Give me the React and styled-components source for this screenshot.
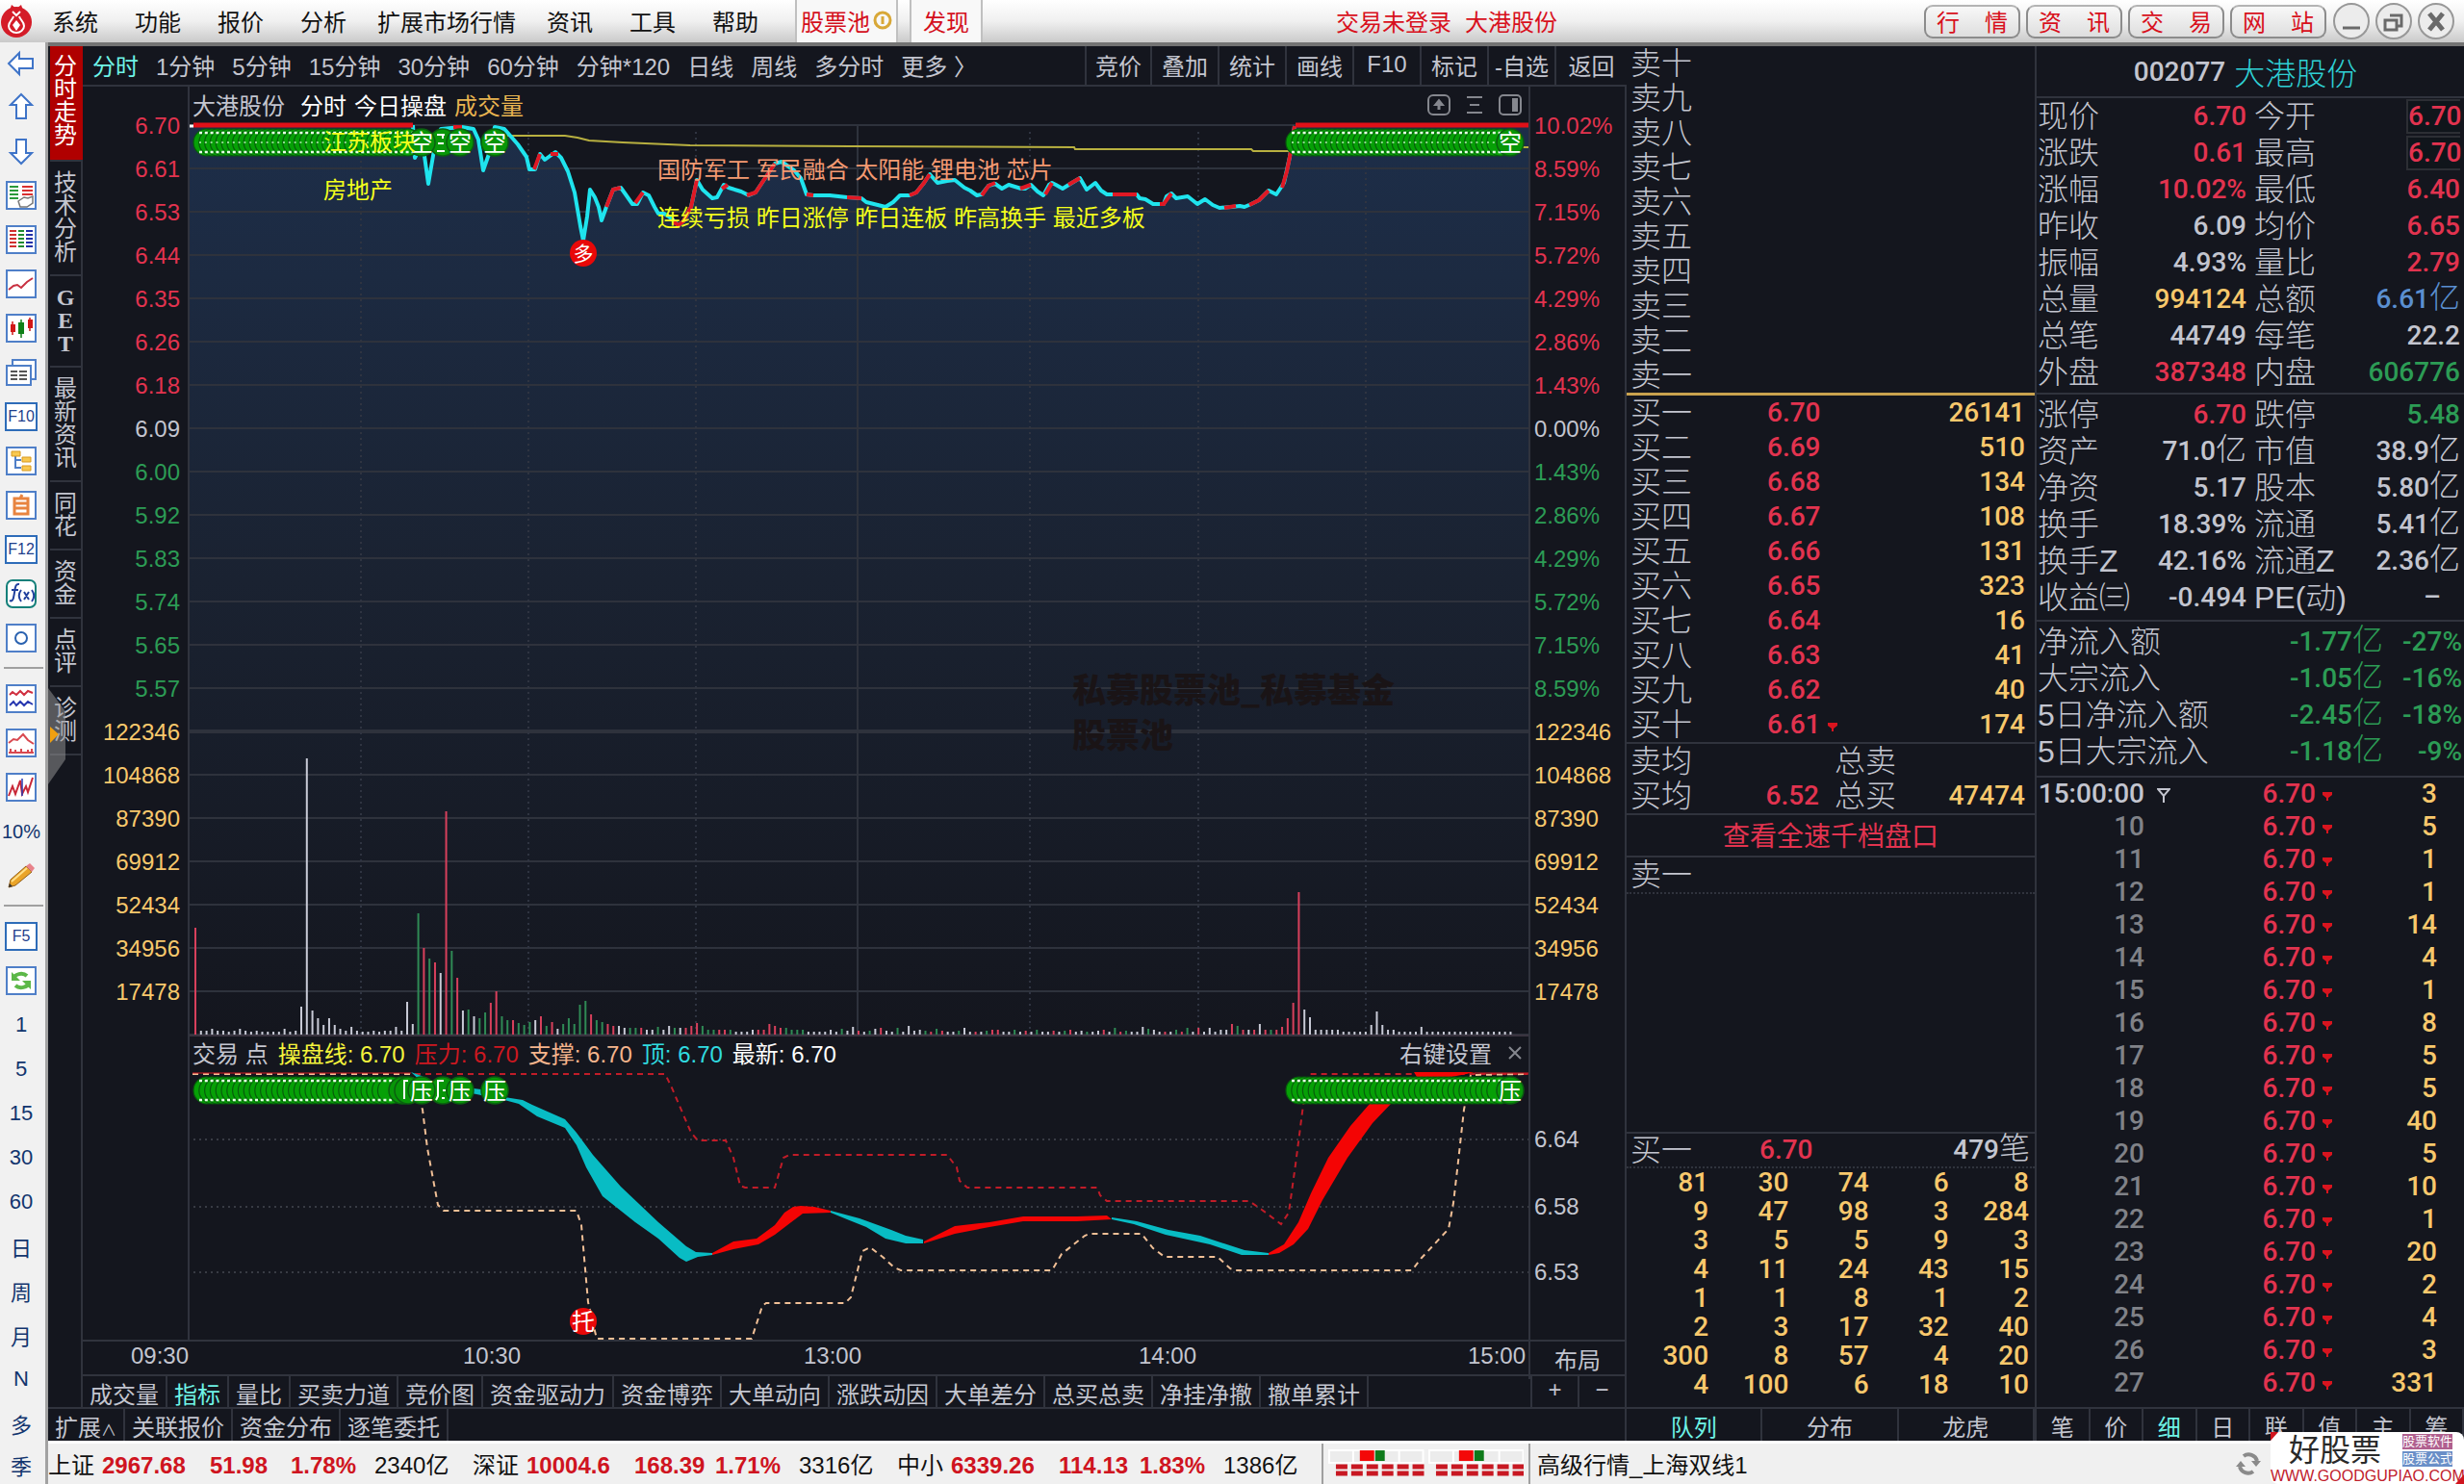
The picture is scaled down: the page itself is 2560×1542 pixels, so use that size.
import React from "react";
import styled, { createGlobalStyle } from "styled-components";

const GlobalStyle = createGlobalStyle`
  * {
    box-sizing: border-box;
  }
  body {
    margin: 0;
    background: #14161e;
    font-family: "Liberation Sans", "Noto Sans CJK SC", sans-serif;
    font-size: 24px;
  }
  button {
    border: 0;
    padding: 0;
    background: transparent;
    color: inherit;
    font: inherit;
    white-space: nowrap;
  }
`;

const colors = {
  text: "#c3c5cf",
  red: "#e2334f",
  green: "#2c9c55",
  gold: "#f8c86c",
  cyan: "#2fd0d4",
  active: "#6ff3e6",
  blue: "#5a8fd0",
  gray: "#808288",
  line: "#30333d",
  bg: "#14161e",
};

const Page = styled.div`
  display: flex;
  flex-direction: column;
  min-height: 100vh;
  background: ${colors.bg};
`;

const TopBar = styled.header`
  display: flex;
  align-items: center;
  height: 44px;
  background: linear-gradient(#ffffff, #f0f0f0 50%, #cacaca);
`;

const MenuGroup = styled.nav`
  display: flex;
  align-items: center;
  height: 44px;
`;

const Logo = styled.svg`
  width: 35px;
  height: 38px;
  flex: none;
`;

const MenuItem = styled.button`
  height: 44px;
  padding: 0 ${(p) => (p.$wide ? 13 : 19)}px 2px;
  color: #111;
`;

const MenuTab = styled.button`
  display: flex;
  align-items: center;
  gap: 3px;
  height: 44px;
  padding: 0 ${(p) => (p.$narrow ? 12 : 4)}px 2px;
  margin-right: 12px;
  border: 2px solid #c0c0c0;
  border-width: 0 2px;
  background: #f8f8f8;
  color: #d40f1c;
`;

const TabSpacer = styled.span`
  width: 19px;
`;

const TopTitle = styled.div`
  display: flex;
  justify-content: flex-end;
  gap: 14px;
  flex: 1;
  padding: 0 381px 2px 0;
  color: #d8101c;
`;

const WindowGroup = styled.div`
  display: flex;
  align-items: center;
  gap: 4px;
  padding-right: 9px;
`;

const PillButton = styled.button`
  display: flex;
  justify-content: space-between;
  align-items: center;
  width: 100px;
  height: 35px;
  padding: 0 11px 1px;
  margin-right: 2px;
  border: 2px solid #8c8c8c;
  border-top-color: #b4b4b4;
  border-radius: 9px;
  background: linear-gradient(#f8f8f8, #dedede);
  color: #d8101c;
`;

const RoundButton = styled.button`
  width: 40px;
  height: 40px;
  svg {
    display: block;
  }
`;

const Body = styled.div`
  display: flex;
  flex: 1;
`;

const Rail = styled.aside`
  width: 50px;
  flex: none;
  border-right: 3px solid #a2a2a2;
  background: #f1f1f1;
`;

const RailItem = styled.button`
  display: flex;
  align-items: center;
  justify-content: center;
  width: 44px;
  height: 46px;
  color: #12356e;
  font-size: ${(p) => (p.$small ? 20 : 22)}px;
  &:first-child {
    height: 44px;
  }
  &:last-child {
    height: 40px;
  }
  svg {
    display: block;
    overflow: visible;
  }
`;

const RailKey = styled.span`
  width: 34px;
  height: 30px;
  border: 2px solid #2e6cb8;
  background: #fff;
  color: #1f3f8c;
  font-size: 16px;
  line-height: 26px;
  text-align: center;
`;

const RailRule = styled.hr`
  height: 2px;
  margin: 7px 2px 8px 4px;
  border: 0;
  background: #a0a0a0;
`;

const Main = styled.div`
  display: flex;
  flex-direction: column;
  flex: 1;
  min-width: 0;
  border-top: 4px solid #737373;
`;

const Workspace = styled.main`
  display: flex;
  flex: 1;
  color: ${colors.text};
`;

const Left = styled.section`
  display: flex;
  flex-direction: column;
  flex: 1;
  min-width: 0;
`;

const LeftTop = styled.div`
  display: flex;
  flex: 1;
`;

const SideTabs = styled.nav`
  position: relative;
  width: 36px;
  flex: none;
  padding-left: 2px;
  border-right: 2px solid ${colors.line};
`;

const SideTab = styled.button`
  display: block;
  width: 34px;
  padding: ${(p) => (p.$active ? "9px 6px 13px 4px" : "10px 6px 11px 4px")};
  border-bottom: 2px solid ${colors.line};
  background: ${(p) => (p.$active ? "#b00000" : "transparent")};
  color: ${(p) => (p.$active ? "#fff" : colors.text)};
  line-height: 24px;
  white-space: normal;
  word-break: break-all;
`;

const GetLabel = styled.span`
  display: block;
  padding: 0 2px;
  font-family: "Liberation Serif", serif;
  font-weight: bold;
`;

const PullHandle = styled.svg`
  position: absolute;
  left: 0;
  top: 667px;
`;

const ChartArea = styled.div`
  display: flex;
  flex-direction: column;
  flex: 1;
  min-width: 0;
`;

const Toolbar = styled.div`
  display: flex;
  justify-content: space-between;
  height: 42px;
  border-bottom: 2px solid ${colors.line};
`;

const Periods = styled.div`
  display: flex;
  align-items: center;
  gap: 18px;
  padding: 0 0 2px 10px;
`;

const Period = styled.button`
  color: ${(p) => (p.$active ? colors.active : colors.text)};
`;

const Tools = styled.div`
  display: grid;
  grid-template-columns: 68px repeat(6, 70px) 75px;
`;

const Tool = styled.button`
  padding-bottom: 2px;
  border-left: 2px solid ${colors.line};
`;

const ChartBody = styled.div`
  display: grid;
  grid-template-columns: 111px 1fr 102px;
  flex: 1;
`;

const Axis = styled.div`
  padding: 18px ${(p) => (p.$right ? 0 : 8)}px 0 ${(p) => (p.$right ? 4 : 0)}px;
  border: 0 solid ${colors.line};
  border-width: ${(p) => (p.$right ? "0 2px" : "0 2px 0 0")};
  text-align: ${(p) => (p.$right ? "left" : "right")};
`;

const AxisLabel = styled.div`
  height: 45px;
  line-height: 45px;
  color: ${(p) => colors[p.$tone]};
`;

const SubAxis = styled.div`
  display: grid;
  grid-template-rows: 70px 68px;
  padding-top: 109px;
  line-height: 44px;
`;

const Plot = styled.div`
  display: grid;
  grid-template-columns: 1fr;
  grid-template-rows: 40px 947px 36px 279px;
  min-width: 0;
`;

const PlotSvg = styled.svg`
  grid-row: 1 / -1;
  grid-column: 1;
  width: 100%;
  height: 100%;
`;

const PlotHeader = styled.div`
  display: flex;
  align-items: center;
  grid-row: ${(p) => p.$row};
  grid-column: 1;
  gap: ${(p) => p.$gap}px;
  padding: 0 0 3px 3px;
`;

const Legend = styled.span`
  color: ${(p) => p.$color};
  white-space: nowrap;
`;

const HeaderIcons = styled.div`
  display: flex;
  align-items: center;
  gap: 17px;
  margin-left: auto;
  padding-right: 7px;
`;

const HeaderAction = styled.button`
  color: ${colors.text};
`;

const TimeRow = styled.div`
  display: grid;
  grid-template-columns: 1fr 102px;
  height: 36px;
  border-top: 2px solid ${colors.line};
`;

const Times = styled.div`
  display: grid;
  grid-template-columns: 345fr 354fr 348fr 342fr 60px;
  padding: 0 3px 0 50px;
  line-height: 30px;
`;

const LayoutButton = styled.button`
  padding-bottom: 4px;
  border: 0 solid ${colors.line};
  border-width: 0 2px;
`;

const TabRow = styled.div`
  display: flex;
  height: ${(p) => p.$height}px;
  border-top: 2px solid ${colors.line};
  border-right: 2px solid ${colors.line};
`;

const BottomTab = styled.button`
  padding: 0 7px 4px;
  border-right: 2px solid ${colors.line};
  color: ${(p) => (p.$active ? colors.active : colors.text)};
`;

const Caret = styled.span`
  font-size: 16px;
`;

const ZoomButtons = styled.div`
  display: grid;
  grid-template-columns: 49px 49px;
  margin-left: auto;
  button {
    padding-bottom: 4px;
    border-left: 2px solid ${colors.line};
  }
`;

const Orders = styled.section`
  display: flex;
  flex-direction: column;
  width: 424px;
  flex: none;
`;

const Info = styled.section`
  display: flex;
  flex-direction: column;
  width: 446px;
  flex: none;
  border-left: 2px solid ${colors.line};
`;

const Table = styled.table`
  width: 100%;
  border-collapse: collapse;
  table-layout: fixed;
  td,
  th {
    height: ${(p) => p.$row}px;
    padding: 0;
    line-height: ${(p) => p.$row}px;
    white-space: nowrap;
    vertical-align: middle;
  }
`;

const Label = styled.th`
  padding-left: ${(p) => p.$pad || 3}px !important;
  font-size: 32px;
  font-weight: 300;
  text-align: left;
`;

const Num = styled.td`
  padding-right: ${(p) => p.$pad || 0}px !important;
  color: ${(p) => colors[p.$tone || "text"]};
  font-family: Roboto, "Noto Sans CJK SC", sans-serif;
  font-size: 28px;
  font-weight: 500;
  text-align: ${(p) => p.$align || "right"};
`;

const Unit = styled.span`
  font-size: 32px;
  font-weight: 300;
  line-height: 30px;
`;

const Boxed = styled.span`
  display: block;
  height: 36px;
  margin-left: 62px;
  border: 2px solid #2c2e34;
  border-right: 0;
  background: #10151b;
  line-height: 32px;
`;

const PriceText = styled.span`
  margin-left: 46px;
`;

const QueueWrap = styled.div`
  padding: 0 6px 8px 2px;
`;

const Section = styled.div`
  padding: ${(p) => p.$pad || "0"};
  border-top: ${(p) => (p.$gold ? "3px solid #c9a24e" : `2px solid ${colors.line}`)};
`;

const DepthLink = styled.button`
  display: block;
  width: 100%;
  height: 42px;
  padding-bottom: 4px;
  color: ${colors.red};
  font-size: 28px;
`;

const Dotted = styled.div`
  border-bottom: 2px dotted ${colors.line};
`;

const Blank = styled.div`
  flex: 1;
`;

const PanelTabs = styled.div`
  display: grid;
  grid-template-columns: repeat(${(p) => p.$count}, 1fr);
  height: 35px;
  margin-top: auto;
  border-top: 2px solid ${colors.line};
`;

const PanelTab = styled.button`
  padding-bottom: 4px;
  border-right: 2px solid ${colors.line};
  color: ${(p) => (p.$active ? colors.active : colors.text)};
`;

const StockHead = styled.h1`
  display: flex;
  align-items: center;
  justify-content: center;
  gap: 9px;
  height: 52px;
  margin: 0;
  padding-right: 10px;
  font-size: 32px;
  font-weight: 300;
  color: ${colors.cyan};
`;

const StockCode = styled.span`
  color: ${colors.text};
  font-family: Roboto, sans-serif;
  font-size: 28px;
  font-weight: 500;
`;

const StatusBar = styled.footer`
  position: relative;
  display: flex;
  align-items: center;
  height: 45px;
  border-top: 3px solid #fff;
  background: #f0f0f0;
  color: #111;
  white-space: nowrap;
`;

const IndexGroup = styled.div`
  display: grid;
  grid-template-columns: 56px 112px 84px 87px 101px;
  align-items: baseline;
  width: 441px;
  padding-bottom: 2px;
  b {
    color: #cf1420;
  }
`;

const Meters = styled.div`
  display: flex;
  gap: 4px;
  width: 217px;
  height: 42px;
  padding: 5px 5px;
  border: 2px solid #a0a0a0;
  border-width: 0 2px;
`;

const LineName = styled.span`
  flex: 1;
  padding: 0 0 2px 7px;
`;

const SiteBadge = styled.div`
  position: absolute;
  right: 0;
  bottom: 0;
  width: 201px;
  height: 54px;
  border-radius: 8px;
  background: #fff;
`;

const SiteTop = styled.div`
  display: flex;
  align-items: center;
  justify-content: space-between;
  height: 38px;
  padding: 0 12px 0 19px;
  font-size: 32px;
  line-height: 38px;
  color: #2a2a2a;
`;

const SiteTags = styled.span`
  display: grid;
  gap: 2px;
  font-size: 13px;
  line-height: 16px;
  color: #fff;
`;

const SiteTag = styled.span`
  background: ${(p) => p.$color};
`;

const SiteUrl = styled.a`
  display: block;
  color: #c0202c;
  font-size: 16px;
  line-height: 15px;
  text-align: center;
  text-decoration: none;
`;

const Corner = styled.svg`
  position: absolute;
  left: 0;
  top: 0;
`;

const SyncIcon = styled.svg`
  margin-right: 210px;
`;

/* ---------- data ---------- */

const periods = ["分时", "1分钟", "5分钟", "15分钟", "30分钟", "60分钟", "分钟*120", "日线", "周线", "多分时", "更多 〉"];
const tools = ["竞价", "叠加", "统计", "画线", "F10", "标记", "-自选", "返回"];
const sideTabs = ["分时走势", "技术分析", "GET", "最新资讯", "同花", "资金", "点评", "诊测"];
const indicatorTabs = ["成交量", "指标", "量比", "买卖力道", "竞价图", "资金驱动力", "资金博弈", "大单动向", "涨跌动因", "大单差分", "总买总卖", "净挂净撤", "撤单累计"];
const linkTabs = ["关联报价", "资金分布", "逐笔委托"];

const prices = ["6.70", "6.61", "6.53", "6.44", "6.35", "6.26", "6.18", "6.09", "6.00", "5.92", "5.83", "5.74", "5.65", "5.57"];
const percents = ["10.02%", "8.59%", "7.15%", "5.72%", "4.29%", "2.86%", "1.43%", "0.00%", "1.43%", "2.86%", "4.29%", "5.72%", "7.15%", "8.59%"];
const volumes = ["122346", "104868", "87390", "69912", "52434", "34956", "17478"];
const toneAt = (i) => (i < 7 ? "red" : i === 7 ? "text" : "green");

const digits = ["一", "二", "三", "四", "五", "六", "七", "八", "九", "十"];
const buys = [
  ["6.70", "26141"],
  ["6.69", "510"],
  ["6.68", "134"],
  ["6.67", "108"],
  ["6.66", "131"],
  ["6.65", "323"],
  ["6.64", "16"],
  ["6.63", "41"],
  ["6.62", "40"],
  ["6.61", "174"],
];

const queue = [
  [81, 30, 74, 6, 8],
  [9, 47, 98, 3, 284],
  [3, 5, 5, 9, 3],
  [4, 11, 24, 43, 15],
  [1, 1, 8, 1, 2],
  [2, 3, 17, 32, 40],
  [300, 8, 57, 4, 20],
  [4, 100, 6, 18, 10],
];

const quoteRows = [
  ["现价", "6.70", "red", "今开", "6.70", "red", true],
  ["涨跌", "0.61", "red", "最高", "6.70", "red", true],
  ["涨幅", "10.02%", "red", "最低", "6.40", "red"],
  ["昨收", "6.09", "text", "均价", "6.65", "red"],
  ["振幅", "4.93%", "text", "量比", "2.79", "red"],
  ["总量", "994124", "gold", "总额", "6.61亿", "blue"],
  ["总笔", "44749", "text", "每笔", "22.2", "text"],
  ["外盘", "387348", "red", "内盘", "606776", "green"],
];

const financeRows = [
  ["涨停", "6.70", "red", "跌停", "5.48", "green"],
  ["资产", "71.0亿", "text", "市值", "38.9亿", "text"],
  ["净资", "5.17", "text", "股本", "5.80亿", "text"],
  ["换手", "18.39%", "text", "流通", "5.41亿", "text"],
  ["换手Z", "42.16%", "text", "流通Z", "2.36亿", "text"],
  ["收益㈢", "-0.494", "text", "PE(动)", "–", "text"],
];

const flows = [
  ["净流入额", "-1.77亿", "-27%"],
  ["大宗流入", "-1.05亿", "-16%"],
  ["5日净流入额", "-2.45亿", "-18%"],
  ["5日大宗流入", "-1.18亿", "-9%"],
];

const ticks = [3, 5, 1, 1, 14, 4, 1, 8, 5, 5, 40, 5, 10, 1, 20, 2, 4, 3, 331];

const indexes = [
  ["上证", "2967.68", "51.98", "1.78%", "2340亿"],
  ["深证", "10004.6", "168.39", "1.71%", "3316亿"],
  ["中小", "6339.26", "114.13", "1.83%", "1386亿"],
];

/* minute volume: "<colour><height>", one entry per minute */
const minuteVolume = (
  "r111 w4 w4 w6 w4 w4 w3 w4 w6 w4 w3 w4 w3 w3 w3 w3 w6 w3 w4 w29 w287 w25 w17 w10 w17 w10 w6 w4 w8 w4 w3 w3 w4 w3 w4 w4 w8 w4 w34 w11 " +
  "g126 r90 g79 r75 w64 r232 g87 r59 w25 g26 w19 g17 g23 r33 r45 g19 g15 r15 g12 g10 g13 w15 r19 g9 r13 w6 g11 g17 g11 g31 " +
  "g35 r21 g15 g13 r11 r9 w9 w7 g7 g7 r7 w5 w5 g8 w5 w9 g7 w7 r7 r9 r12 g9 g5 g5 r5 r5 g5 w3 w3 w3 w5 r5 r5 r11 r9 r7 g7 g5 g5 g5 " +
  "w3 w3 w3 w3 w5 w3 g6 w4 w8 r4 w3 g4 w6 r7 w4 w3 g7 w3 w9 w4 w5 g4 r3 g6 r4 w3 w3 g4 w7 w3 r3 w3 g4 r5 r5 w3 w3 g5 w3 r4 w3 " +
  "g5 w3 w3 r4 w3 g4 r5 w3 w4 g3 w3 " +
  "w4 r5 w3 g7 r3 g4 w3 w3 w8 g6 w5 w3 r3 w3 g5 r3 g7 w3 r7 w3 w7 w3 w5 w5 r11 g9 r5 w5 r5 w11 r5 g5 r5 r8 r17 r33 r148 " +
  "w26 w18 w5 w5 w5 w5 w5 w3 w3 w3 w3 w3 w10 w24 w10 w5 w5 w3 w3 w3 w3 w8 w3 w3 w3 w3 w3 w3 w3 w3 w3 w3 w3 w3 w3 w3 w3 w3"
).split(" ");

const barColors = { r: "#d8405c", g: "#2f8a55", w: "#c8cad6" };

const priceLine =
  "429,130 431,164 438,150 441,162 445,191 452,150 458,134 480,132 492,134 497,145 502,177 508,160 514,132 524,134 538,150 547,163 550,176 556,176 561,160 566,166 577,158 583,164 590,178 597,200 603,235 606,250 610,225 613,197 618,205 622,215 625,229 630,215 637,197 645,195 650,202 657,212 662,212 668,200 674,203 680,215 684,222 690,222 695,225 705,234 710,230 718,215 724,187 730,197 740,206 745,205 752,192 757,195 770,199 778,203 785,200 795,185 805,170 812,168 825,177 832,185 838,202 845,203 862,203 880,205 895,206 900,210 920,215 928,210 935,203 945,203 952,200 960,190 966,181 974,190 984,188 992,187 1002,195 1008,198 1015,203 1020,202 1027,193 1034,191 1041,196 1048,192 1061,196 1065,196 1071,192 1078,199 1084,203 1090,192 1093,190 1097,192 1104,196 1112,191 1122,185 1129,197 1138,190 1144,198 1150,202 1181,202 1184,206 1190,207 1198,212 1209,212 1212,204 1217,201 1222,206 1234,204 1244,212 1252,207 1260,213 1267,216 1280,215 1288,214 1293,215 1300,212 1308,208 1318,198 1326,202 1334,190 1340,163 1345,131";

/* rising runs, drawn again in red over the line */
const risingRuns = [
  "471,132 480,132",
  "555,176 561,160",
  "572,160 580,160",
  "630,215 637,197 645,195",
  "660,211 668,200",
  "699,230 705,234 710,230 718,215 724,187",
  "750,196 756,192",
  "776,203 785,200 795,185 805,170",
  "838,202 845,203",
  "880,205 895,206",
  "945,203 952,200 960,190 966,181",
  "1020,203 1027,193 1034,190",
  "1060,196 1071,192",
  "1086,202 1093,190",
  "1110,192 1122,185",
  "1156,202 1181,202",
  "1205,212 1209,212 1217,201",
  "1272,216 1284,214",
  "1298,213 1308,208 1318,198",
  "1332,195 1337,178 1340,163 1345,131",
];

const range = (from, to, step) => {
  const out = [];
  for (let x = from; x <= to; x += step) out.push(x);
  return out;
};

const dropBeads = [438, 478, 514];

function withUnit(value) {
  if (!value.endsWith("亿")) return value;
  return (
    <>
      {value.slice(0, -1)}
      <Unit>亿</Unit>
    </>
  );
}

/* ---------- chart ---------- */

const Bead = ({ x, y, char }) => (
  <g>
    <circle cx={x} cy={y} r="14" fill="#089608" stroke="#0b5f10" strokeWidth="1.5" />
    {char && (
      <text x={x} y={y + 9} fill="#fff" fontSize="24" textAnchor="middle">
        {char}
      </text>
    )}
  </g>
);

const BeadRun = ({ from, to, y, middle }) => (
  <g>
    {range(from, to, 5.8).map((x) => (
      <circle key={x} cx={x} cy={y} r="14" fill="#06a006" stroke="#075c0c" strokeWidth="1.2" />
    ))}
    <path
      d={`M${from - 8} ${y - 10}H${to + 4}M${from - 8} ${y + 10}H${to + 4}`}
      stroke="#e8ffe8"
      strokeWidth="2.5"
      strokeDasharray="3 2.8"
    />
    {middle && <path d={`M${from - 8} ${y}H${to + 4}`} stroke="#b8f0b8" strokeWidth="1.5" strokeDasharray="2 3.8" />}
  </g>
);

const PriceChart = () => (
  <PlotSvg viewBox="197 90 1391 1302" preserveAspectRatio="none" role="img" aria-label="分时图">
    <defs>
      <linearGradient id="fill" x1="0" y1="130" x2="0" y2="1076" gradientUnits="userSpaceOnUse">
        <stop offset="0" stopColor="#1d2e49" />
        <stop offset="0.5" stopColor="#1a2231" />
        <stop offset="1" stopColor="#14161e" />
      </linearGradient>
    </defs>
    <polygon fill="url(#fill)" points={`197,1076 197,130 ${priceLine} 1588,131 1588,1076`} />
    {range(130, 1076, 45).map((y) => (
      <path key={y} d={`M197 ${y}H1588`} stroke="#2e323c" strokeWidth={y === 760 ? 4 : 2} />
    ))}
    {[375, 549, 723, 1070, 1245, 1419].map((x) => (
      <path key={x} d={`M${x} 137V1076`} stroke="#2f3441" strokeWidth="2" strokeDasharray="2 4" />
    ))}
    <path d="M891 130V1076" stroke="#2e323c" strokeWidth="2" />
    <path d="M197 1076H1588" stroke="#3a3440" strokeWidth="2" />
    {minuteVolume.map((bar, i) => {
      const h = Number(bar.slice(1));
      return <rect key={i} x={202 + i * 5.79} y={1075 - h} width="2" height={h} fill={barColors[bar[0]]} />;
    })}

    <polyline
      points="520,141 587,141 600,143 612,146 647,148 717,151 883,152 1116,153 1117,155 1300,155 1302,157 1340,157"
      fill="none"
      stroke="#b8b040"
      strokeWidth="2"
    />
    <path d="M1575 153H1588" stroke="#b8b040" strokeWidth="2" />
    <polyline points={priceLine} fill="none" stroke="#1fe4ee" strokeWidth="4" strokeLinejoin="round" />
    {risingRuns.map((points) => (
      <polyline key={points} points={points} fill="none" stroke="#e01824" strokeWidth="4" />
    ))}
    <path d="M201 130H429M1346 130H1588" stroke="#e01018" strokeWidth="5" />
    <path d="M197 131H201" stroke="#fff" strokeWidth="3" />

    <BeadRun from={215} to={428} y={148} middle />
    <Bead x={460} y={148} />
    {dropBeads.map((x) => (
      <Bead key={x} x={x} y={148} char="空" />
    ))}
    <path d="M454 140h8M460 140v4M455 149h6M454 157h8" stroke="#fff" strokeWidth="2" />
    <BeadRun from={1350} to={1563} y={148} middle />
    <Bead x={1569} y={148} char="空" />
    <circle cx="606" cy="263" r="14" fill="#e80808" />
    <text x="606" y="271" fill="#fff" fontSize="21" textAnchor="middle">
      多
    </text>

    <g fontSize="24" fill="#f4ff1c">
      <text x="336" y="156">江苏板块</text>
      <text x="336" y="206">房地产</text>
      <text x="683" y="185" fill="#f49a72">
        国防军工 军民融合 太阳能 锂电池 芯片
      </text>
      <text x="683" y="235">连续亏损 昨日涨停 昨日连板 昨高换手 最近多板</text>
    </g>
    <g fontSize="35" fontWeight="900" fill="#1a1416" fontFamily="Noto Sans CJK SC, sans-serif">
      <text x="1114" y="730">私募股票池_私募基金</text>
      <text x="1114" y="777">股票池</text>
    </g>

    {/* trade point panel */}
    {[1184, 1254, 1322].map((y) => (
      <path key={y} d={`M201 ${y}H1588`} stroke="#383b44" strokeWidth="2" strokeDasharray="2 4" />
    ))}
    <g fill="none" strokeWidth="2">
      <polyline
        points="200,1116 691,1116 697,1128 718,1177 725,1185 754,1185 762,1203 769,1232 774,1234 805,1234 814,1203 820,1200 984,1200 994,1213 997,1227 1005,1234 1140,1234 1143,1242 1150,1248 1298,1248 1311,1257 1331,1272 1339,1260 1346,1210 1354,1148 1361,1116 1588,1116"
        stroke="#c01c28"
        strokeDasharray="6 5"
      />
      <polyline
        points="200,1116 427,1116 439,1153 444,1193 449,1220 455,1252 461,1258 599,1258 604,1273 611,1353 618,1383 620,1391 781,1391 792,1357 796,1354 878,1354 884,1348 896,1300 904,1296 917,1306 929,1317 936,1320 1093,1320 1103,1303 1127,1284 1132,1282 1186,1282 1198,1297 1210,1306 1265,1306 1278,1318 1283,1320 1467,1320 1477,1307 1505,1277 1510,1250 1515,1207 1521,1153 1528,1117 1588,1116"
        stroke="#f0bf96"
        strokeDasharray="6 5"
      />
      <path d="M200 1115H427M1532 1115H1588" stroke="#d01822" strokeWidth="1" />
    </g>
    <g fill="#08bcc4">
      <polygon points="427,1114 438,1118 452,1126 500,1132 524,1140 543,1143 553,1148 587,1163 599,1177 616,1200 645,1233 684,1270 713,1295 723,1301 740,1302 740,1304 725,1306 713,1311 706,1307 684,1287 660,1270 626,1243 609,1213 599,1190 587,1172 558,1160 539,1147 524,1143 490,1136 440,1126" />
      <polygon points="863,1258 893,1266 926,1278 941,1284 959,1288 959,1292 941,1292 920,1287 900,1275 880,1267 863,1260" />
      <polygon points="1155,1265 1181,1269 1214,1278 1247,1284 1293,1299 1318,1302 1318,1304 1290,1304 1257,1293 1211,1283 1178,1272 1155,1267" />
    </g>
    <g fill="#f40404">
      <polygon points="740,1302 762,1290 786,1287 805,1273 815,1260 824,1254 832,1253 846,1254 863,1258 863,1260 834,1261 822,1270 805,1283 788,1293 762,1298 740,1304" />
      <polygon points="960,1290 992,1274 1028,1270 1063,1264 1119,1264 1150,1263 1155,1267 1119,1269 1063,1269 1028,1275 992,1282 960,1292" />
      <polygon points="1318,1302 1334,1293 1349,1270 1362,1240 1380,1203 1403,1170 1423,1147 1445,1147 1426,1167 1400,1203 1374,1247 1359,1277 1344,1293 1329,1302 1318,1304" />
      <polygon points="1469,1114 1533,1114 1508,1119 1472,1119" />
    </g>
    <BeadRun from={215} to={412} y={1133} />
    <Bead x={418} y={1133} />
    <Bead x={424} y={1133} />
    <Bead x={460} y={1133} />
    {dropBeads.map((x) => (
      <Bead key={x} x={x} y={1133} char="压" />
    ))}
    <path d="M424 1123h-4v19M461 1123h-6v16l-2 4M460 1133h3M459 1141h3" fill="none" stroke="#fff" strokeWidth="2" />
    <BeadRun from={1350} to={1563} y={1133} />
    <Bead x={1569} y={1133} char="压" />
    <circle cx="606" cy="1373" r="14" fill="#e80808" />
    <text x="606" y="1382" fill="#fff" fontSize="24" textAnchor="middle">
      托
    </text>
  </PlotSvg>
);

/* ---------- rail icons ---------- */

const IconBox = ({ children }) => (
  <svg width="32" height="30" viewBox="0 0 32 30" fill="none">
    <rect x="1" y="1" width="30" height="28" fill="#fff" stroke="#4f7fc8" strokeWidth="2" />
    {children}
  </svg>
);

const Arrow = ({ turn }) => (
  <svg width="30" height="30" viewBox="0 0 30 30">
    <path
      d="M2 15 13 4v6h14v10H13v6z"
      transform={`rotate(${turn} 15 15)`}
      fill="#fff"
      stroke="#3f74c8"
      strokeWidth="2"
    />
  </svg>
);

const railTop = [
  <Arrow turn={0} />,
  <Arrow turn={90} />,
  <Arrow turn={-90} />,
  <IconBox>
    <path d="M4 6h9M4 10h9M4 14h9M4 18h9" stroke="#2a9a3a" strokeWidth="2" />
    <path d="M17 6h11M17 10h11M17 14h11" stroke="#d83030" strokeWidth="2" />
    <path d="M13 21l6-4 4 1 5-2v7l-6 4h-7z" fill="#fff" stroke="#777" strokeWidth="1.5" />
  </IconBox>,
  <IconBox>
    <path d="M4 6h7M4 10h7M4 14h7M4 18h7M4 22h7" stroke="#d03030" strokeWidth="2" />
    <path d="M13 6h6M13 10h6M13 14h6M13 18h6M13 22h6" stroke="#208a30" strokeWidth="2" />
    <path d="M21 6h7M21 10h7M21 14h7M21 18h7M21 22h7" stroke="#2030a8" strokeWidth="2" />
  </IconBox>,
  <IconBox>
    <path d="M3 21l5-4 4-1 4 3 6-6 6-4" stroke="#c83040" strokeWidth="2" />
  </IconBox>,
  <IconBox>
    <path d="M7 8v14M25 4v14" stroke="#d01818" strokeWidth="1.5" />
    <path d="M16 6v19" stroke="#108018" strokeWidth="1.5" />
    <path d="M5 11h5v8H5zM23 6h5v9h-5z" fill="#d01818" />
    <path d="M13 9h6v12h-6z" fill="#108018" />
  </IconBox>,
  <svg width="32" height="30" viewBox="0 0 32 30" fill="#fff" stroke="#4f7fc8" strokeWidth="2">
    <path d="M7 2h24v20H7z" />
    <path d="M1 8h25v20H1z" />
    <path d="M5 14h7M14 14h8M5 18h7M14 18h8M5 22h7M14 22h8" stroke="#555" />
  </svg>,
  <RailKey>F10</RailKey>,
  <IconBox>
    <path d="M10 8v14h6M10 14h6" stroke="#4f7fc8" strokeWidth="2" />
    <path d="M6 5h9v5H6zM17 11h9v5h-9zM17 20h9v5h-9z" fill="#f8c850" stroke="#d89a20" />
  </IconBox>,
  <IconBox>
    <path d="M9 8h14v16H9zM9 13h14M9 18h14M15 8l2-4" stroke="#e88440" strokeWidth="3" />
  </IconBox>,
  <RailKey>F12</RailKey>,
  <svg width="32" height="30" viewBox="0 0 32 30" fill="none">
    <rect x="1" y="1" width="30" height="28" rx="6" fill="#fff" stroke="#15807a" strokeWidth="2" />
    <path
      d="M14 5c-5-1-4 6-6 14-.5 3-2 4-4 3M6 11h7M16 11c-3 4-3 8 0 12M27 11c3 4 3 8 0 12M19 13l5 8M24 13l-5 8"
      stroke="#1f3f9c"
      strokeWidth="2"
    />
  </svg>,
  <IconBox>
    <circle cx="16" cy="15" r="6" stroke="#2a62b0" strokeWidth="2" />
  </IconBox>,
];

const railMiddle = [
  <IconBox>
    <path d="M4 11l3-3 4 3 4-4 4 4 4-4 5 2" stroke="#d03040" strokeWidth="2" />
    <path d="M4 22l4-4 3 4 4-4 4 4 4-4 5 3" stroke="#2838b0" strokeWidth="2" />
  </IconBox>,
  <IconBox>
    <path d="M3 15l5-4 4 1 6-6 5 6 6 4" stroke="#d84850" strokeWidth="2" />
    <path d="M3 25h26M5 25v-4M10 25v-3M16 25v-4M23 25v-3M27 25v-4" stroke="#d84850" strokeWidth="2" />
  </IconBox>,
  <IconBox>
    <path d="M3 24l4-10 3 8 5-14 2 14 4-8 2 6 5-15" stroke="#c82838" strokeWidth="2" />
    <path d="M17 6v18" stroke="#2838b0" strokeWidth="1.5" />
  </IconBox>,
  "10%",
  <svg width="30" height="30" viewBox="0 0 30 30">
    <path d="M2 27l2-8L20 5l6 6L9 25z" fill="#eaa428" stroke="#94601a" />
    <path d="M5 21L21 7" stroke="#ffe08a" strokeWidth="2" />
    <path d="M20 5l4-3 5 5-3 4z" fill="#e8828a" />
    <path d="M2 27l1-4 3 3z" fill="#333" />
  </svg>,
];

const railBottom = [
  <RailKey>F5</RailKey>,
  <IconBox>
    <path d="M8 13a8 6 0 0 1 14-3M24 17a8 6 0 0 1-14 3" stroke="#5cb848" strokeWidth="4" />
    <path d="M6 6v9h9zM26 24v-9h-9z" fill="#5cb848" />
  </IconBox>,
  "1",
  "5",
  "15",
  "30",
  "60",
  "日",
  "周",
  "月",
  "N",
  "多",
  "季",
];

const Mark = styled.svg`
  margin-left: 6px;
  vertical-align: middle;
`;

const DownMark = () => (
  <Mark width="12" height="10" viewBox="0 0 12 10">
    <path d="M1 1h10v3L7 7v3H5V7L1 4z" fill="#d8141e" />
  </Mark>
);

const Meter = ({ red }) => (
  <svg width="100" height="30" viewBox="0 0 100 30">
    <path d="M1 2h98v13H1zM26 2v13M74 2v13" fill="#ececec" stroke="#fff" strokeWidth="2" />
    <rect x={red} y="2" width="15" height="11" fill="#f40808" />
    <rect x={red + 16} y="2" width="10" height="11" fill="#0e7a1a" />
    <path d="M8 19h92M8 26h92" stroke="#c81822" strokeWidth="5" strokeDasharray="12 4" />
  </svg>
);

const Col = styled.col`
  width: ${(p) => p.$w}px;
`;

const QuoteTable = ({ rows }) => (
  <Table $row={38}>
    <colgroup>
      <Col $w={80} />
      <Col $w={138} />
      <Col $w={104} />
      <col />
    </colgroup>
    <tbody>
      {rows.map(([a, av, at, b, bv, bt, boxed]) => (
        <tr key={a}>
          <Label $pad={1}>{a}</Label>
          <Num $tone={at}>{withUnit(av)}</Num>
          <Label $pad={8}>{b}</Label>
          <Num $tone={bt} $pad={bv === "–" ? 24 : 4}>
            {boxed ? <Boxed>{bv}</Boxed> : withUnit(bv)}
          </Num>
        </tr>
      ))}
    </tbody>
  </Table>
);

const App = () => (
  <Page>
    <GlobalStyle />
    <TopBar>
      <MenuGroup>
        <Logo viewBox="0 0 35 38">
          <circle cx="17" cy="20" r="16" fill="#d41c28" />
          <path d="M12 2l5 4 5-4 2 6H10z" fill="#d41c28" />
          <path d="M13 9l4 4 4-4" stroke="#fff" strokeWidth="2" fill="none" />
          <path d="M14 14c-1 4-5 5-5 10 0 4 4 7 8 7s8-3 8-7c0-5-4-6-5-10" stroke="#fff" strokeWidth="2" fill="none" />
          <path d="M17 18l4 5-4 6-4-6z" fill="#fff" />
        </Logo>
        {["系统", "功能", "报价", "分析"].map((m) => (
          <MenuItem key={m}>{m}</MenuItem>
        ))}
        <MenuItem $wide>扩展市场行情</MenuItem>
        {["资讯", "工具", "帮助"].map((m) => (
          <MenuItem key={m}>{m}</MenuItem>
        ))}
        <TabSpacer />
        <MenuTab>
          股票池
          <svg width="20" height="20" viewBox="0 0 20 20" fill="none" stroke="#d8a838" strokeWidth="3">
            <circle cx="10" cy="10" r="8" />
            <path d="M10 6v8" />
          </svg>
        </MenuTab>
        <MenuTab $narrow>发现</MenuTab>
      </MenuGroup>
      <TopTitle>
        <span>交易未登录</span>
        <span>大港股份</span>
      </TopTitle>
      <WindowGroup>
        {["行情", "资讯", "交易", "网站"].map((m) => (
          <PillButton key={m}>
            <span>{m[0]}</span>
            <span>{m[1]}</span>
          </PillButton>
        ))}
        {["M11 27h18", "M16 14h12v11h-4M11 19h12v10H11z", "M13 12l14 17M27 12L13 29"].map((d, i) => (
          <RoundButton key={d} aria-label={["最小化", "还原", "关闭"][i]}>
            <svg width="40" height="40" viewBox="0 0 40 40" fill="none">
              <circle cx="20" cy="20" r="18" fill="#ececec" stroke="#989898" strokeWidth="2" />
              <path d={d} stroke="#6a6a6a" strokeWidth={i === 2 ? 5 : 3} />
            </svg>
          </RoundButton>
        ))}
      </WindowGroup>
    </TopBar>

    <Body>
      <Rail>
        <div>
          {railTop.map((icon, i) => (
            <RailItem key={i}>{icon}</RailItem>
          ))}
          <RailRule />
        </div>
        {railMiddle.map((icon, i) => (
          <RailItem key={i} $small={icon === "10%"}>
            {icon}
          </RailItem>
        ))}
        <RailRule />
        {railBottom.map((icon, i) => (
          <RailItem key={i}>{icon}</RailItem>
        ))}
      </Rail>

      <Main>
        <Workspace>
          <Left>
            <LeftTop>
              <SideTabs>
                {sideTabs.map((t, i) => (
                  <SideTab key={t} $active={i === 0}>
                    {t === "GET" ? <GetLabel>G E T</GetLabel> : t}
                  </SideTab>
                ))}
                <PullHandle width="18" height="100" viewBox="0 0 18 100">
                  <path d="M0 0l18 24v50L0 100z" fill="#9a9a9a" fillOpacity="0.5" />
                  <path d="M2 40l9 8-9 9z" fill="#f0a010" />
                </PullHandle>
              </SideTabs>
              <ChartArea>
                <Toolbar>
                  <Periods>
                    {periods.map((p, i) => (
                      <Period key={p} $active={i === 0}>
                        {p}
                      </Period>
                    ))}
                  </Periods>
                  <Tools>
                    {tools.map((t) => (
                      <Tool key={t}>{t}</Tool>
                    ))}
                  </Tools>
                </Toolbar>
                <ChartBody>
                  <Axis>
                    {prices.map((p, i) => (
                      <AxisLabel key={p} $tone={toneAt(i)}>
                        {p}
                      </AxisLabel>
                    ))}
                    {volumes.map((v) => (
                      <AxisLabel key={v} $tone="gold">
                        {v}
                      </AxisLabel>
                    ))}
                  </Axis>
                  <Plot>
                    <PriceChart />
                    <PlotHeader $row={1} $gap={8}>
                      <Legend $color={colors.text}>大港股份</Legend>
                      <span />
                      <Legend $color="#fff">分时</Legend>
                      <Legend $color="#fff">今日操盘</Legend>
                      <Legend $color="#e8b450">成交量</Legend>
                      <HeaderIcons>
                        <svg width="24" height="22" viewBox="0 0 24 22" fill="none" stroke="#85878e" strokeWidth="2">
                          <rect x="1" y="1" width="22" height="20" rx="5" />
                          <path d="M12 16V7" strokeWidth="3" />
                          <path d="M8 11l4-5 4 5z" fill="#85878e" />
                        </svg>
                        <svg width="16" height="20" viewBox="0 0 16 20" stroke="#85878e" strokeWidth="2">
                          <path d="M0 2h16M3 10h10M0 18h16" />
                        </svg>
                        <svg width="24" height="22" viewBox="0 0 24 22" fill="none" stroke="#85878e" strokeWidth="2">
                          <rect x="1" y="1" width="22" height="20" rx="4" />
                          <path d="M17 4v14" strokeWidth="6" />
                        </svg>
                      </HeaderIcons>
                    </PlotHeader>
                    <PlotHeader $row={3} $gap={10}>
                      <Legend $color={colors.text}>交易 点</Legend>
                      <Legend $color="#f4f43c">操盘线: 6.70</Legend>
                      <Legend $color="#cc1820">压力: 6.70</Legend>
                      <Legend $color="#f4b48c">支撑: 6.70</Legend>
                      <Legend $color="#30dce0">顶: 6.70</Legend>
                      <Legend $color="#fff">最新: 6.70</Legend>
                      <HeaderIcons>
                        <HeaderAction>右键设置</HeaderAction>
                        <svg width="14" height="14" viewBox="0 0 14 14" stroke="#85878e" strokeWidth="2">
                          <path d="M1 1l12 12M13 1L1 13" />
                        </svg>
                      </HeaderIcons>
                    </PlotHeader>
                  </Plot>
                  <Axis $right>
                    {percents.map((p, i) => (
                      <AxisLabel key={i} $tone={toneAt(i)}>
                        {p}
                      </AxisLabel>
                    ))}
                    {volumes.map((v) => (
                      <AxisLabel key={v} $tone="gold">
                        {v}
                      </AxisLabel>
                    ))}
                    <SubAxis>
                      <span>6.64</span>
                      <span>6.58</span>
                      <span>6.53</span>
                    </SubAxis>
                  </Axis>
                </ChartBody>
                <TimeRow>
                  <Times>
                    {["09:30", "10:30", "13:00", "14:00", "15:00"].map((t) => (
                      <span key={t}>{t}</span>
                    ))}
                  </Times>
                  <LayoutButton>布局</LayoutButton>
                </TimeRow>
                <TabRow $height={34}>
                  {indicatorTabs.map((t, i) => (
                    <BottomTab key={t} $active={i === 1}>
                      {t}
                    </BottomTab>
                  ))}
                  <ZoomButtons>
                    <button>+</button>
                    <button>−</button>
                  </ZoomButtons>
                </TabRow>
              </ChartArea>
            </LeftTop>
            <TabRow $height={35}>
              <BottomTab>
                扩展<Caret>∧</Caret>
              </BottomTab>
              {linkTabs.map((t) => (
                <BottomTab key={t}>{t}</BottomTab>
              ))}
            </TabRow>
          </Left>

          <Orders>
            <Table $row={36}>
              <tbody>
                {[...digits].reverse().map((d) => (
                  <tr key={d}>
                    <Label $pad={4}>卖{d}</Label>
                  </tr>
                ))}
              </tbody>
            </Table>
            <Section $gold>
              <Table $row={36}>
                <colgroup>
                  <Col $w={100} />
                  <Col $w={118} />
                  <col />
                </colgroup>
                <tbody>
                  {buys.map(([price, qty], i) => (
                    <tr key={price}>
                      <Label $pad={4}>买{digits[i]}</Label>
                      <Num $tone="red" $align="left">
                        <PriceText>{price}</PriceText>
                        {i === 9 && <DownMark />}
                      </Num>
                      <Num $tone="gold" $pad={10}>
                        {qty}
                      </Num>
                    </tr>
                  ))}
                </tbody>
              </Table>
            </Section>
            <Section>
              <Table $row={36}>
                <colgroup>
                  <Col $w={100} />
                  <Col $w={100} />
                  <Col $w={90} />
                  <col />
                </colgroup>
                <tbody>
                  <tr>
                    <Label $pad={4}>卖均</Label>
                    <Num />
                    <Label $pad={16}>总卖</Label>
                    <Num />
                  </tr>
                  <tr>
                    <Label $pad={4}>买均</Label>
                    <Num $tone="red">6.52</Num>
                    <Label $pad={16}>总买</Label>
                    <Num $tone="gold" $pad={10}>
                      47474
                    </Num>
                  </tr>
                </tbody>
              </Table>
            </Section>
            <Section>
              <DepthLink>查看全速千档盘口</DepthLink>
            </Section>
            <Section>
              <Dotted>
                <Table $row={36}>
                  <tbody>
                    <tr>
                      <Label $pad={4}>卖一</Label>
                    </tr>
                  </tbody>
                </Table>
              </Dotted>
            </Section>
            <Blank />
            <Section>
              <Dotted>
                <Table $row={34}>
                  <colgroup>
                    <Col $w={138} />
                    <Col $w={140} />
                    <col />
                  </colgroup>
                  <tbody>
                    <tr>
                      <Label $pad={4}>买一</Label>
                      <Num $tone="red" $align="left">
                        6.70
                      </Num>
                      <Num $pad={5}>
                        479<Unit>笔</Unit>
                      </Num>
                    </tr>
                  </tbody>
                </Table>
              </Dotted>
              <QueueWrap>
                <Table $row={30}>
                  <tbody>
                    {queue.map((row, i) => (
                      <tr key={i}>
                        {row.map((n, j) => (
                          <Num key={j} $tone="gold">
                            {n}
                          </Num>
                        ))}
                      </tr>
                    ))}
                  </tbody>
                </Table>
              </QueueWrap>
            </Section>
            <PanelTabs $count={3}>
              <PanelTab $active>队列</PanelTab>
              <PanelTab>分布</PanelTab>
              <PanelTab>龙虎</PanelTab>
            </PanelTabs>
          </Orders>

          <Info>
            <StockHead>
              <StockCode>002077</StockCode>
              大港股份
            </StockHead>
            <Section $pad="0 0 2px">
              <QuoteTable rows={quoteRows} />
            </Section>
            <Section $pad="2px 0 4px">
              <QuoteTable rows={financeRows} />
            </Section>
            <Section $pad="2px 0 6px">
              <Table $row={38}>
                <colgroup>
                  <Col $w={200} />
                  <Col $w={160} />
                  <col />
                </colgroup>
                <tbody>
                  {flows.map(([name, amount, pct]) => (
                    <tr key={name}>
                      <Label $pad={1}>{name}</Label>
                      <Num $tone="green">{withUnit(amount)}</Num>
                      <Num $tone="green" $pad={2}>
                        {pct}
                      </Num>
                    </tr>
                  ))}
                </tbody>
              </Table>
            </Section>
            <Section>
              <Table $row={34}>
                <colgroup>
                  <Col $w={112} />
                  <Col $w={40} />
                  <Col $w={156} />
                  <col />
                </colgroup>
                <tbody>
                  {ticks.map((qty, i) => (
                    <tr key={i}>
                      <Num $tone={i === 0 ? "text" : "gray"}>{i === 0 ? "15:00:00" : i + 9}</Num>
                      <Num $align="center">
                        {i === 0 && (
                          <svg width="14" height="16" viewBox="0 0 14 16" fill="none" stroke="#c3c5cf" strokeWidth="2">
                            <path d="M1 2h12L7 9zM7 8v8" />
                          </svg>
                        )}
                      </Num>
                      <Num $tone="red">
                        6.70
                        <DownMark />
                      </Num>
                      <Num $tone="gold" $pad={28}>
                        {qty}
                      </Num>
                    </tr>
                  ))}
                </tbody>
              </Table>
            </Section>
            <PanelTabs $count={8}>
              {["笔", "价", "细", "日", "联", "值", "主", "筹"].map((t) => (
                <PanelTab key={t} $active={t === "细"}>
                  {t}
                </PanelTab>
              ))}
            </PanelTabs>
          </Info>
        </Workspace>

        <StatusBar>
          {indexes.map(([name, value, change, pct, amount]) => (
            <IndexGroup key={name}>
              <span>{name}</span>
              <b>{value}</b>
              <b>{change}</b>
              <b>{pct}</b>
              <span>{amount}</span>
            </IndexGroup>
          ))}
          <Meters>
            <Meter red={33} />
            <Meter red={32} />
          </Meters>
          <LineName>高级行情_上海双线1</LineName>
          <SyncIcon width="28" height="28" viewBox="0 0 28 28" fill="none" stroke="#8a8a8a" strokeWidth="4">
            <path d="M5 17a9 9 0 0 0 14 5M23 11A9 9 0 0 0 9 6" />
            <path d="M1 17l5-6 5 6zM17 11l5 6 5-6z" fill="#8a8a8a" stroke="none" />
          </SyncIcon>
          <SiteBadge>
            <Corner width="201" height="54" viewBox="0 0 201 54">
              <path d="M0 0h8L0 9zM201 54h-9l9-10z" fill="#d0141e" />
            </Corner>
            <SiteTop>
              好股票
              <SiteTags>
                <SiteTag $color="#b0608f">股票软件</SiteTag>
                <SiteTag $color="#6a8fc8">股票公式</SiteTag>
              </SiteTags>
            </SiteTop>
            <SiteUrl href="#">WWW.GOODGUPIAO.COM</SiteUrl>
          </SiteBadge>
        </StatusBar>
      </Main>
    </Body>
  </Page>
);

export default App;
